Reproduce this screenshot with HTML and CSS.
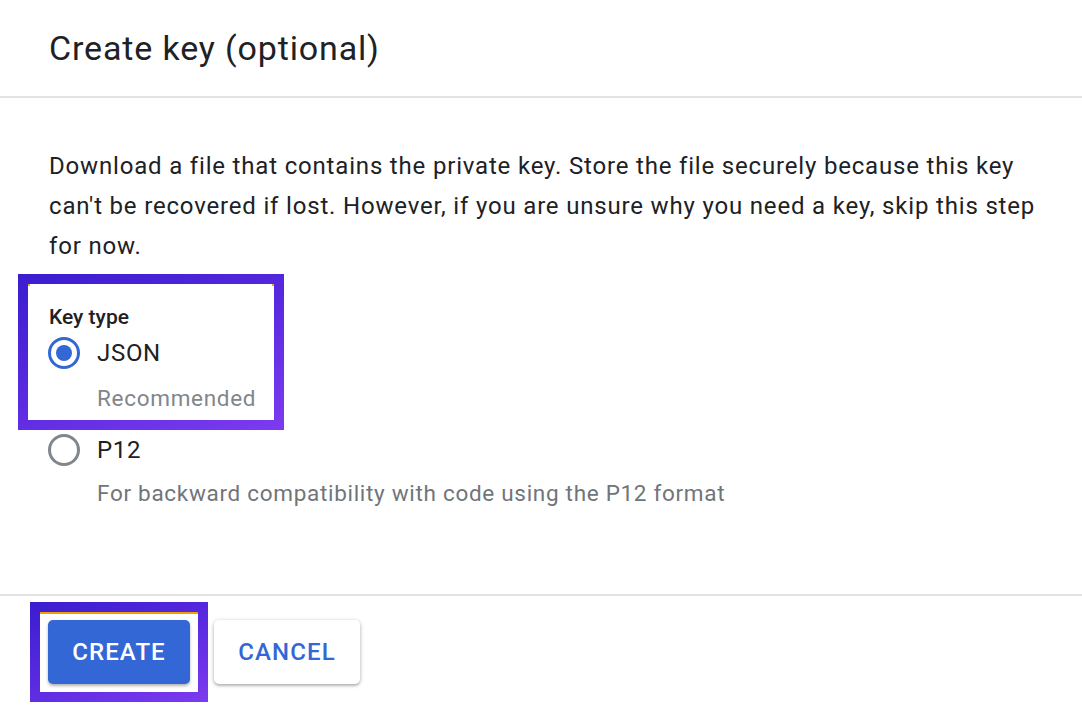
FILE: index.html
```html
<!DOCTYPE html>
<html lang="en">
<head>
<meta charset="utf-8">
<title>Create key (optional)</title>
<link rel="stylesheet" href="styles.css">
</head>
<body>
<div class="dialog">
  <header class="head">
    <h1 class="title">Create key (optional)</h1>
  </header>
  <main class="body">
    <p class="desc">Download a file that contains the private key. Store the file securely because this key can't be recovered if lost. However, if you are unsure why you need a key, skip this step for now.</p>
    <div class="mark mark-keytype">
      <div class="mark-inner keytype">
        <div class="label">Key type</div>
        <label class="option">
          <span class="radio checked"></span>
          <span class="opt-name">JSON</span>
        </label>
        <div class="hint">Recommended</div>
      </div>
    </div>
    <div class="plain-opt">
      <label class="option">
        <span class="radio"></span>
        <span class="opt-name">P12</span>
      </label>
      <div class="hint">For backward compatibility with code using the P12 format</div>
    </div>
  </main>
  <footer class="foot">
    <div class="mark mark-btn">
      <div class="mark-inner btn-inner">
        <button class="btn btn-primary">CREATE</button>
      </div>
    </div>
    <button class="btn btn-secondary">CANCEL</button>
  </footer>
</div>
</body>
</html>
```

FILE: styles.css
```css
* { box-sizing: border-box; }
html, body { margin: 0; padding: 0; background: #fff; }
body {
  font-family: Roboto, "Noto Sans", "Liberation Sans", sans-serif;
  color: #202124;
  width: 1082px;
  height: 724px;
  overflow: hidden;
}
.head {
  height: 98px;
  padding-left: 49px;
  display: flex;
  align-items: center;
  border-bottom: 2px solid #e3e3e3;
}
.title {
  margin: 0;
  font-size: 34px;
  font-weight: 400;
  line-height: 40px;
  letter-spacing: 0.85px;
  color: #202124;
}
.body {
  height: 498px;
  padding: 48px 30px 0 49px;
  border-bottom: 2px solid #e3e3e3;
}
.desc {
  margin: 0;
  font-size: 24px;
  line-height: 40px;
  letter-spacing: 0.82px;
  color: #202124;
}
.mark {
  padding: 10px;
  background: linear-gradient(160deg, #3a1dcf 0%, #5a2ae0 50%, #7d3bef 100%);
  display: inline-block;
}
.mark-inner { background: #fff; position: relative; }
.mark-inner::before,
.mark-inner::after {
  content: "";
  position: absolute;
  width: 2px; height: 2px;
  background: #f5a623;
  top: 0;
}
.mark-inner::before { left: 0; }
.mark-inner::after { right: 0; }
.mark-keytype { margin: 8px 0 0 -31px; }
.keytype {
  width: 246px;
  height: 136px;
  padding: 21px 0 0 21px;
}
.label {
  font-size: 21px;
  font-weight: 500;
  line-height: 24px;
  color: #202124;
}
.option {
  display: flex;
  align-items: center;
  height: 34px;
}
.keytype .option { margin-top: 7px; }
.radio {
  width: 32px; height: 32px;
  border-radius: 50%;
  border: 3px solid #80868b;
  margin-left: -1px;
  margin-right: 17px;
  position: relative;
  flex: none;
}
.radio.checked { border-color: #3367d6; }
.radio.checked::after {
  content: "";
  position: absolute;
  left: 5px; top: 5px;
  width: 16px; height: 16px;
  border-radius: 50%;
  background: #3367d6;
}
.opt-name { font-size: 24px; color: #202124; letter-spacing: 0.7px; }
.hint {
  font-size: 22.5px;
  color: #80868b;
  margin-left: 48px;
  line-height: 24px;
  margin-top: 16px;
  letter-spacing: 0.7px;
}
.plain-opt { margin-top: 3px; }
.plain-opt .hint { margin-top: 14px; color: #70757a; }
.foot {
  display: flex;
  align-items: flex-start;
  padding: 6px 0 0 30px;
  gap: 6px;
}
.btn-inner {
  width: 158px;
  height: 80px;
  padding: 6px 0 0 8px;
  border-top: 2px solid #f0a000;
}
.btn-inner::before, .btn-inner::after { display: none; }
.btn {
  height: 64px;
  border: none;
  border-radius: 5px;
  font-family: Roboto, "Noto Sans", "Liberation Sans", sans-serif;
  font-size: 24px;
  font-weight: 500;
  letter-spacing: 1.1px;
  cursor: pointer;
  padding: 0;
}
.btn-primary {
  width: 142px;
  background: #3367d6;
  color: #fff;
  box-shadow: 0 2px 3px rgba(0,0,0,0.3);
}
.btn-secondary {
  width: 146px;
  margin-top: 18px;
  background: #fff;
  color: #3367d6;
  box-shadow: 0 1px 4px rgba(0,0,0,0.28), 0 2px 2px rgba(0,0,0,0.12);
}
```
